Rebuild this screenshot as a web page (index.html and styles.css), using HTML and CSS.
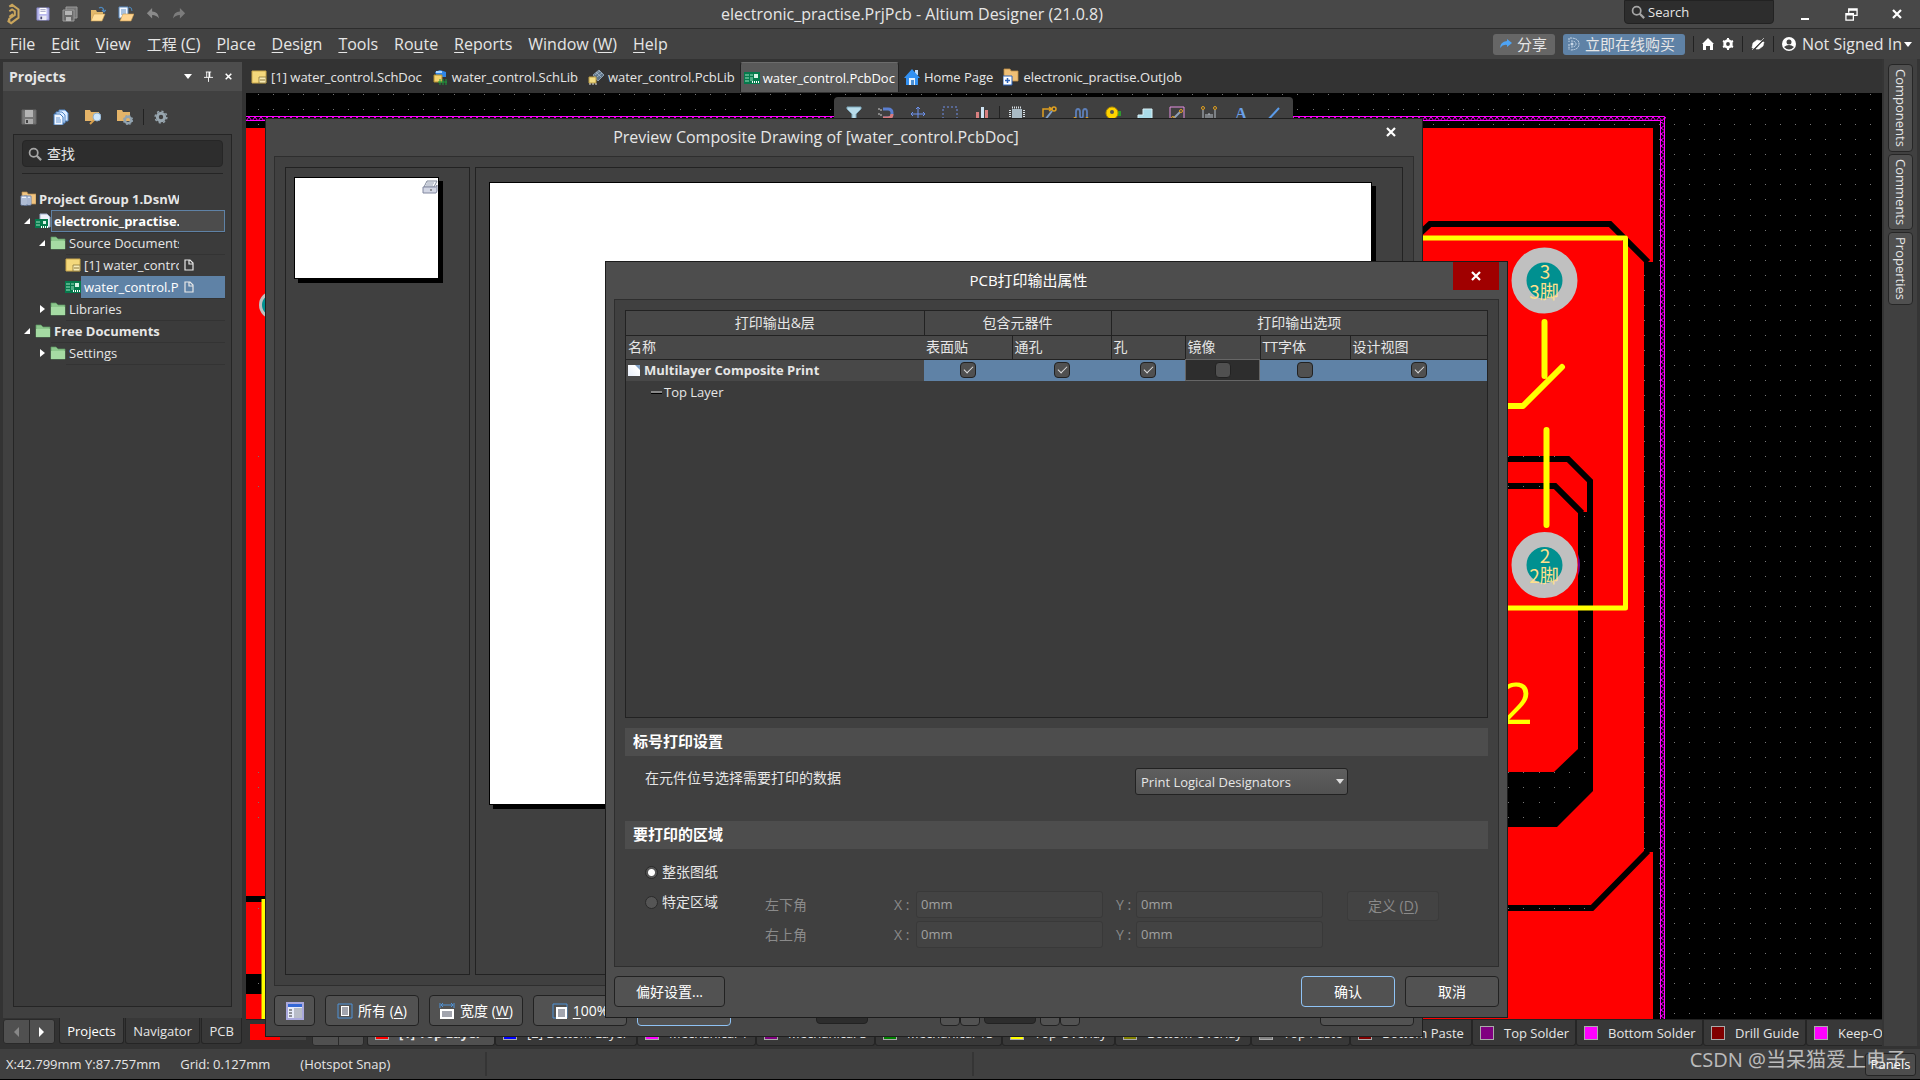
FILE: index.html
```html
<!DOCTYPE html>
<html lang="zh-CN">
<head>
    <meta charset="UTF-8">
    <meta name="viewport" content="width=device-width, initial-scale=1.0">
    <title>electronic_practise.PrjPcb - Altium Designer (21.0.8)</title>
    <link rel="stylesheet" href="styles.css">
</head>
<body>

    <!-- Icon sprite -->
    <svg class="sprite" aria-hidden="true">
        <symbol id="i-logo" viewBox="0 0 16 24"><path d="M4 4l3-2 7 5v9l-8 6-3-2 1-3 6-4V9L7 7 4 9M4 15l4-3M4 20v-3" fill="none" stroke="#c9a55c" stroke-width="2.200"/></symbol>
        <symbol id="i-save" viewBox="0 0 16 16"><path d="M1 1h14v14H1z" fill="#b9b9ee" stroke="#7c7cb8"/><path d="M4 1h8v7H4z" fill="#fff"/><path d="M4 10h8v5H4z" fill="#e8e8f4"/><path d="M5 11h2v3H5z" fill="#4b4b78"/><path d="M5 3h6M5 5h6" stroke="#9a9ac0"/></symbol>
        <symbol id="i-savegray" viewBox="0 0 16 16"><path d="M1 1h14v14H1z" fill="#777" stroke="#666"/><path d="M4 1h8v7H4z" fill="#b4b4b4"/><path d="M4 10h8v5H4z" fill="#aaa"/><path d="M5 11h2v3H5z" fill="#444"/></symbol>
        <symbol id="i-saveall" viewBox="0 0 16 16"><path d="M4 1h11v11H4z" fill="#777" stroke="#999"/><path d="M1 4h11v11H1z" fill="#6a6a6a" stroke="#999"/><path d="M3 5h7v4H3zM4 11h5v4H4z" fill="#b4b4b4"/></symbol>
        <symbol id="i-open" viewBox="0 0 16 16"><path d="M1 15V4h5l1 2h6v3" fill="#e2b96c"/><path d="M1 15l3-7h11l-3 7z" fill="#ffdf9c" stroke="#c99b4e" stroke-width=".6"/><path d="M9 2q4-2 5 3M12 4l2 2 2-2" fill="none" stroke="#4e88bd" stroke-width="1.2"/></symbol>
        <symbol id="i-opendoc" viewBox="0 0 16 16"><path d="M1 1h9v11H1z" fill="#f4f8ff" stroke="#5b8ac0"/><path d="M3 4h5M3 6h5M3 8h5" stroke="#5b8ac0"/><path d="M2 15l3-7h11l-3 7z" fill="#ffd592" stroke="#c99b4e" stroke-width=".6"/><path d="M11 1q3 0 3 4" fill="none" stroke="#4e88bd"/></symbol>
        <symbol id="i-undo" viewBox="0 0 16 16"><path d="M7 1v4q7 0 8 8-3-4-8-4v4L1 7z" fill="#8a8a8a"/></symbol>
        <symbol id="i-redo" viewBox="0 0 16 16"><path d="M9 1v4q-7 0-8 8 3-4 8-4v4l6-6z" fill="#7c7c7c"/></symbol>
        <symbol id="i-search" viewBox="0 0 16 16"><circle cx="6.500" cy="6.500" r="4.700" fill="none" stroke="#a5a5a5" stroke-width="2"/><path d="M10 10l5 5" stroke="#a5a5a5" stroke-width="2.600"/></symbol>
        <symbol id="i-sch" viewBox="0 0 16 14"><path d="M1 1h14v12H1z" fill="#f4d87c" stroke="#caa74b"/><path d="M8 7h7v6H8z" fill="#f8ebb4" stroke="#8c7638" stroke-width=".8"/><path d="M9 10h5" stroke="#8c7638"/></symbol>
        <symbol id="i-schlib" viewBox="0 0 16 16"><path d="M3 3l5-2 6 2v5H5z" fill="#2f86e8"/><path d="M4 2h6v2H4z" fill="#a9d4ff"/><path d="M2 6h8v7H2z" fill="#f2d26d" stroke="#b08d2e"/><path d="M6 13h9M8 10v6M11 10v6M14 10v6" stroke="#1f9a3c"/></symbol>
        <symbol id="i-pcblib" viewBox="0 0 16 16"><path d="M5 6l6-5 5 5-6 6z" fill="#5f7488" stroke="#9eb1c2" stroke-width=".8"/><path d="M7 6l5-4M9 8l5-4M8 3l5 5" stroke="#a9bccd" stroke-width=".8"/><path d="M1 8h7v6H1z" fill="#f2dc82" stroke="#b89a45"/><path d="M2 16v-2M5 16v-2M8 16v-2" stroke="#ddd"/></symbol>
        <symbol id="i-pcb" viewBox="0 0 16 14"><path d="M0 1h16v12H0z" fill="#067a4c"/><path d="M2 3v8M4 3v8" stroke="#9be3c0" stroke-dasharray="2 1"/><path d="M6 4h3M6 7h3M6 9h3" stroke="#9be3c0"/><path d="M10 3h4v4h-4z" fill="#d8f3e5"/><path d="M8 11h8" stroke="#fff" stroke-width="2" stroke-dasharray="1 1"/></symbol>
        <symbol id="i-prj" viewBox="0 0 16 16"><path d="M5 1h7l3 3v10H5z" fill="#eef2fb" stroke="#9fb0cc"/><path d="M0 6h13v9H0z" fill="#067a4c"/><path d="M2 8v6M4 8v6" stroke="#9be3c0" stroke-dasharray="2 1"/><path d="M8 8h3v3H8z" fill="#d8f3e5"/><path d="M6 14h7" stroke="#fff" stroke-width="2" stroke-dasharray="1 1"/></symbol>
        <symbol id="i-home" viewBox="0 0 16 18"><path d="M11 2h3v5h-3z" fill="#c6dcf5"/><path d="M8 1l8 9h-2v7H2v-7H0z" fill="#3391f2"/><path d="M5 10h6v7H5z" fill="#e6f2ff"/><path d="M7 12h3v5H7z" fill="#4a8fd4"/></symbol>
        <symbol id="i-outjob" viewBox="0 0 16 18"><path d="M1 1h6l1 2h7v10H1z" fill="#efbf76" stroke="#c08f48" stroke-width=".8"/><path d="M0 8h9v9H0z" fill="#fff" stroke="#2c62b8"/><path d="M2 12.500h5M4.500 10v5" stroke="#2c62b8" stroke-width="1.500"/></symbol>
        <symbol id="i-docs" viewBox="0 0 16 16"><path d="M6 1h6l3 3v8H6z" fill="#dcebff" stroke="#5288c8"/><path d="M3 3h6l3 3v8H3z" fill="#dcebff" stroke="#5288c8"/><path d="M1 5h6l3 3v8H1z" fill="#f0f6ff" stroke="#3f79bd"/><path d="M3 9h4M3 11h5M3 13h5" stroke="#6a9bd6"/></symbol>
        <symbol id="i-fsearch" viewBox="0 0 16 16"><path d="M0 1h5l1 2h8v9H0z" fill="#e5b468"/><circle cx="12" cy="8" r="4" fill="#cfe6fa" stroke="#8fb0cd"/><path d="M9 11l-4 4" stroke="#d9a04c" stroke-width="2"/></symbol>
        <symbol id="i-fgear" viewBox="0 0 16 16"><path d="M0 1h5l1 2h7v9H0z" fill="#e5b468"/><circle cx="11" cy="11" r="3.200" fill="none" stroke="#92a3b0" stroke-width="2.400"/><circle cx="11" cy="11" r="4.700" fill="none" stroke="#92a3b0" stroke-width="1" stroke-dasharray="2 1.700"/></symbol>
        <symbol id="i-gear" viewBox="0 0 16 16"><circle cx="8" cy="8" r="4.200" fill="none" stroke="#98a6af" stroke-width="3.400"/><circle cx="8" cy="8" r="6.700" fill="none" stroke="#98a6af" stroke-width="1.600" stroke-dasharray="2.600 2.600"/></symbol>
        <symbol id="i-group" viewBox="0 0 16 16"><path d="M2 1h5l1 2h8v10H2z" fill="#f0c481" stroke="#b58a4a" stroke-width=".7"/><path d="M4 5h7v9H4z" fill="#dfe6f4" stroke="#7186ad"/><path d="M1 5h6v9H1z" fill="#eef3fc" stroke="#7186ad"/><path d="M2 8h4M2 10h4M2 12h4M8 8h2M8 10h2M8 12h2" stroke="#7186ad"/></symbol>
        <symbol id="i-folder" viewBox="0 0 16 14"><path d="M1 1h5l2 2h7v10H1z" fill="#8cc78c" stroke="#5d9a62" stroke-width=".7"/><path d="M1 5h14v8H1z" fill="#a5dba3"/></symbol>
        <symbol id="i-page" viewBox="0 0 10 12"><path d="M1 1h5l3 3v7H1zM5 1v4h4" fill="none" stroke="#e8e8e8" stroke-width="1.200"/></symbol>
        <symbol id="i-printer" viewBox="0 0 16 14"><path d="M5 1h10l-3 6H2z" fill="#f5f7fb" stroke="#7f8799"/><path d="M5 3h7M4 5h7" stroke="#9aa2b4"/><path d="M1 7h13l1-2v6l-1 2H1z" fill="#d2d6e4" stroke="#8288a0"/><path d="M9 9v2" stroke="#444"/></symbol>
        <symbol id="i-x" viewBox="0 0 10 10"><path d="M1 1l8 8M9 1l-8 8" stroke="#fff" stroke-width="2.200"/></symbol>
        <symbol id="i-restore" viewBox="0 0 14 14"><path d="M4 5V1h9v7H9" fill="none" stroke="#fff" stroke-width="1.400"/><path d="M4 2h9M1 7h8" stroke="#fff" stroke-width="2"/><path d="M1 6h8v7H1z" fill="none" stroke="#fff" stroke-width="1.400"/></symbol>
        <symbol id="i-pin" viewBox="0 0 10 12"><path d="M2 1h6M3 1v6M0 7h10M5 7v5" stroke="#fff" fill="none"/><path d="M5 1h2v6H5z" fill="#fff"/></symbol>
        <symbol id="i-share" viewBox="0 0 12 10"><path d="M7 0l5 4-5 4V6Q3 5 0 9q0-6 7-7z" fill="#4ea4f5"/></symbol>
        <symbol id="i-buy" viewBox="0 0 12 14"><path d="M2 1q9 0 9 6t-9 6M3 4q5 0 5 3t-5 3M1 1v4M1 7v6" fill="none" stroke="#c9d8e8" stroke-dasharray="2 .7"/><circle cx="4" cy="7" r="1.500" fill="#c9d8e8"/></symbol>
        <symbol id="i-whome" viewBox="0 0 12 12"><path d="M6 0l6 6h-1v6H8V8H4v4H1V6H0z" fill="#fff"/></symbol>
        <symbol id="i-wgear" viewBox="0 0 12 12"><circle cx="6" cy="6" r="3.300" fill="none" stroke="#fff" stroke-width="2.800"/><path d="M6 0v2M6 10v2M1 3l2 1M9 8l2 1M1 9l2-1M9 4l2-1" stroke="#fff" stroke-width="2"/></symbol>
        <symbol id="i-noext" viewBox="0 0 14 12"><path d="M1 10l1-5 4-3 4 1L3 10zM5 11l6-7h2l-1 4-4 3zM1 12L13 0" fill="#fff" stroke="#fff" stroke-width=".6"/><path d="M2 12L14 1" stroke="#424242"/></symbol>
        <symbol id="i-user" viewBox="0 0 14 14"><circle cx="7" cy="7" r="7" fill="#fff"/><circle cx="7" cy="5" r="2.500" fill="#424242"/><path d="M2 10q5-4 10 0-5 5-10 0z" fill="#424242"/></symbol>
        <!-- active bar -->
        <symbol id="t-filter" viewBox="0 0 16 16"><path d="M1 1h14v2l-5 5v8H6V8L1 3z" fill="#b9dcea" stroke="#7fa9bc"/></symbol>
        <symbol id="t-snap" viewBox="0 0 16 16"><path d="M5 3h5q4 0 4 4 0 5-4 5H5" fill="none" stroke="#5b7fd0" stroke-width="3"/><path d="M14 8q0 4-4 4H5" fill="none" stroke="#d97a7a" stroke-width="3"/><path d="M1 2v12M3 3v11" stroke="#ccc" stroke-dasharray="2 3"/></symbol>
        <symbol id="t-cross" viewBox="0 0 16 16"><path d="M8 1v14M1 8h14" stroke="#6c92ee" fill="none"/><path d="M6 3l2-2 2 2M3 6L1 8l2 2M13 6l2 2-2 2" stroke="#6c92ee" fill="none"/></symbol>
        <symbol id="t-select" viewBox="0 0 16 16"><path d="M1 1h14v14H1z" fill="none" stroke="#6f8fe8" stroke-dasharray="2 2"/></symbol>
        <symbol id="t-align" viewBox="0 0 16 16"><path d="M2 6h3v7H2zM11 4h3v9h-3z" fill="#d98080"/><path d="M7 1h3v12H7z" fill="#cfe4f4"/><path d="M1 14h14" stroke="#eee"/></symbol>
        <symbol id="t-chip" viewBox="0 0 16 16"><path d="M3 3h10v12H3z" fill="#a9bac4"/><path d="M3 1.500h10M1 4v12M15 4v12" stroke="#d8dfe4" stroke-width="2" stroke-dasharray="1 1" fill="none"/></symbol>
        <symbol id="t-route" viewBox="0 0 16 16"><path d="M2 11V3h8M8 1l3 2-3 2" fill="none" stroke="#e0a020" stroke-width="1.500"/><circle cx="13" cy="3" r="2" fill="none" stroke="#e0a020" stroke-width="1.500"/><path d="M11 5l-7 9" stroke="#7fa0c8" stroke-width="2"/></symbol>
        <symbol id="t-wave" viewBox="0 0 16 16"><path d="M1 13q2 0 2-3V6q0-3 2-3t2 3v3q0 3 1.500 3T10 9V6q0-3 2-3t2 3v7" fill="none" stroke="#5d7fb8" stroke-width="1.800"/><circle cx="2" cy="13" r="1.600" fill="none" stroke="#e0a020"/><circle cx="14" cy="13" r="1.600" fill="none" stroke="#e0a020"/></symbol>
        <symbol id="t-via" viewBox="0 0 16 16"><path d="M9 5h7v5H9z" fill="#2e9a2e"/><circle cx="7" cy="7" r="6" fill="#ffd400" stroke="#b89000"/><circle cx="7" cy="6" r="2" fill="#555"/><path d="M6 13h3v3H6z" fill="#ffd400"/></symbol>
        <symbol id="t-poly" viewBox="0 0 16 16"><path d="M1 15V9h5V3h9v12z" fill="#a9dbe8" stroke="#d8f0f6"/></symbol>
        <symbol id="t-line" viewBox="0 0 16 16"><path d="M1 1h14v16H1z" fill="none" stroke="#e58fe0"/><path d="M4 13l7-7" stroke="#8fa0b8" stroke-width="2"/><circle cx="12" cy="5" r="1.500" fill="none" stroke="#e0a020"/><circle cx="4" cy="12" r="1.500" fill="none" stroke="#e0a020"/></symbol>
        <symbol id="t-dim" viewBox="0 0 16 16"><path d="M2 4v12M14 4v12M5 8v6M11 8v6" stroke="#b8c0c8"/><path d="M7 8h2v6H7z" fill="none" stroke="#b8c0c8"/><circle cx="2" cy="2" r="1.500" fill="none" stroke="#e0a020"/><circle cx="14" cy="2" r="1.500" fill="none" stroke="#e0a020"/></symbol>
        <symbol id="t-slash" viewBox="0 0 16 16"><path d="M2 15L14 2" stroke="#5b9be8" stroke-width="2"/></symbol>
        <!-- preview buttons -->
        <symbol id="b-layout" viewBox="0 0 18 18"><path d="M0 0h18v18H0z" fill="#a9a8dc"/><path d="M2 2h14v14H2z" fill="#e8ecfa"/><path d="M2 2h14v3H2z" fill="#3367d6"/><path d="M8 6h8v10H8z" fill="#b8bcc8"/><path d="M3 8h3M3 11h3M3 14h3" stroke="#333"/></symbol>
        <symbol id="b-all" viewBox="0 0 16 16"><path d="M1 1h14v14H1z" fill="none" stroke="#4f92d6"/><path d="M4 3h8v10H4z" fill="#fff"/><path d="M5 5h6M5 7h6M5 9h6M5 11h6" stroke="#444a5c"/></symbol>
        <symbol id="b-width" viewBox="0 0 16 16"><path d="M1 0v5M15 0v5M2 2h12M4 0L2 2l2 2M12 0l2 2-2 2" fill="none" stroke="#4f92d6"/><path d="M1 6h14v10H1z" fill="#fff"/><path d="M3 9h10M3 11h10M3 13h10" stroke="#444a5c"/></symbol>
        <symbol id="b-full" viewBox="0 0 16 16"><path d="M1 1h14v14H1z" fill="none" stroke="#4f92d6"/><path d="M4 4h11v12H4z" fill="#fff"/><path d="M6 7h7M6 9h7M6 11h7M6 13h7" stroke="#444a5c"/></symbol>
    </svg>

    <div class="app">
        <!-- Title bar -->
        <header class="titlebar">
            <div class="quick">
                <svg width="16" height="22"><use href="#i-logo"/></svg>
                <svg width="14" height="14"><use href="#i-save"/></svg>
                <svg width="16" height="16"><use href="#i-saveall"/></svg>
                <svg width="16" height="16"><use href="#i-open"/></svg>
                <svg width="16" height="16"><use href="#i-opendoc"/></svg>
                <svg width="14" height="14"><use href="#i-undo"/></svg>
                <svg width="14" height="14"><use href="#i-redo"/></svg>
            </div>
            <h1 class="app-title">electronic_practise.PrjPcb - Altium Designer (21.0.8)</h1>
            <div class="title-right">
                <label class="top-search">
                    <svg width="14" height="14"><use href="#i-search"/></svg>
                    <input type="text" value="Search" aria-label="Search">
                </label>
                <button class="win-btn" aria-label="Minimize"><span class="min-line"></span></button>
                <button class="win-btn" aria-label="Restore"><svg width="13" height="13"><use href="#i-restore"/></svg></button>
                <button class="win-btn" aria-label="Close"><svg width="10" height="10"><use href="#i-x"/></svg></button>
            </div>
        </header>

        <!-- Menu bar -->
        <nav class="menubar">
            <div class="menus">
                <a href="#"><u>F</u>ile</a>
                <a href="#"><u>E</u>dit</a>
                <a href="#"><u>V</u>iew</a>
                <a href="#"><span class="cjk">工程</span> (<u>C</u>)</a>
                <a href="#"><u>P</u>lace</a>
                <a href="#"><u>D</u>esign</a>
                <a href="#"><u>T</u>ools</a>
                <a href="#">Ro<u>u</u>te</a>
                <a href="#"><u>R</u>eports</a>
                <a href="#">Window (<u>W</u>)</a>
                <a href="#"><u>H</u>elp</a>
            </div>
            <div class="account">
                <button class="share"><svg width="12" height="10"><use href="#i-share"/></svg>分享</button>
                <button class="buy"><svg width="12" height="14"><use href="#i-buy"/></svg>立即在线购买</button>
                <i class="vsep"></i>
                <svg width="12" height="12"><use href="#i-whome"/></svg>
                <svg width="12" height="12"><use href="#i-wgear"/></svg>
                <i class="vsep"></i>
                <svg width="14" height="12"><use href="#i-noext"/></svg>
                <i class="vsep"></i>
                <button class="signin"><svg width="14" height="14"><use href="#i-user"/></svg>Not Signed In<i class="caret"></i></button>
            </div>
        </nav>

        <main class="workspace">
            <!-- Projects panel -->
            <aside class="side">
                <div class="panel">
                    <div class="panel-head">
                        <h2>Projects</h2>
                        <i class="caret"></i>
                        <svg width="9" height="11"><use href="#i-pin"/></svg>
                        <svg width="7" height="7"><use href="#i-x"/></svg>
                    </div>
                    <div class="panel-tools">
                        <svg width="16" height="16"><use href="#i-savegray"/></svg>
                        <svg width="16" height="16"><use href="#i-docs"/></svg>
                        <svg width="16" height="16"><use href="#i-fsearch"/></svg>
                        <svg width="16" height="16"><use href="#i-fgear"/></svg>
                        <i class="vsep"></i>
                        <svg width="14" height="14"><use href="#i-gear"/></svg>
                    </div>
                    <div class="tree-box">
                        <label class="find">
                            <svg width="14" height="14"><use href="#i-search"/></svg>
                            <input type="text" value="查找" aria-label="查找">
                        </label>
                        <ul class="tree">
                            <li class="bold lv0"><svg width="16" height="16"><use href="#i-group"/></svg><span class="name">Project Group 1.DsnWrk</span></li>
                            <li class="bold lv1 current"><i class="open"></i><svg width="16" height="16"><use href="#i-prj"/></svg><span class="name">electronic_practise.PrjPcb</span></li>
                            <li class="lv2"><i class="open"></i><svg width="16" height="14"><use href="#i-folder"/></svg><span class="name">Source Documents</span></li>
                            <li class="lv3"><svg width="16" height="14"><use href="#i-sch"/></svg><span class="name">[1] water_control.SchDoc</span><svg class="state" width="10" height="12"><use href="#i-page"/></svg></li>
                            <li class="lv3 selected"><svg width="16" height="14"><use href="#i-pcb"/></svg><span class="name">water_control.PcbDoc</span><svg class="state" width="10" height="12"><use href="#i-page"/></svg></li>
                            <li class="lv2"><i class="shut"></i><svg width="16" height="14"><use href="#i-folder"/></svg><span class="name">Libraries</span></li>
                            <li class="bold lv1"><i class="open"></i><svg width="16" height="14"><use href="#i-folder"/></svg><span class="name">Free Documents</span></li>
                            <li class="lv2"><i class="shut"></i><svg width="16" height="14"><use href="#i-folder"/></svg><span class="name">Settings</span></li>
                        </ul>
                    </div>
                </div>
                <div class="panel-tabs">
                    <div class="pager">
                        <button aria-label="Previous"><i class="left"></i></button>
                        <button aria-label="Next"><i class="right"></i></button>
                    </div>
                    <button class="on">Projects</button>
                    <button>Navigator</button>
                    <button>PCB</button>
                </div>
            </aside>

            <!-- Documents -->
            <section class="docs">
                <div class="doc-tabs">
                    <a href="#"><svg width="16" height="14"><use href="#i-sch"/></svg>[1] water_control.SchDoc</a>
                    <a href="#"><svg width="16" height="16"><use href="#i-schlib"/></svg>water_control.SchLib</a>
                    <a href="#"><svg width="16" height="16"><use href="#i-pcblib"/></svg>water_control.PcbLib</a>
                    <a href="#" class="on"><svg width="16" height="14"><use href="#i-pcb"/></svg>water_control.PcbDoc</a>
                    <a href="#"><svg width="16" height="18"><use href="#i-home"/></svg>Home Page</a>
                    <a href="#"><svg width="16" height="18"><use href="#i-outjob"/></svg>electronic_practise.OutJob</a>
                </div>

                <div class="canvas">
                    <svg class="board" viewBox="246 93 1636 926" preserveAspectRatio="xMinYMin slice">
                        <defs>
                            <pattern id="hatch-h" x="246" y="116" width="6" height="6" patternUnits="userSpaceOnUse"><path d="M0 5l3-4 3 4" fill="none" stroke="#f0f"/></pattern>
                            <pattern id="hatch-v" x="1660" y="116" width="6" height="6" patternUnits="userSpaceOnUse"><path d="M1 0l4 3-4 3" fill="none" stroke="#f0f"/></pattern>
                        </defs>
                        <path d="M246 93h1636v926H246z"/>
                        <path d="M246 128h1407v891H246z" fill="#f00"/>
                        <!-- clearance gaps in the copper -->
                        <path d="M1644 262h9v590h-9zM1578 512h15v279l-36 36h-157v-55h154l24-23zM246 896h19v6h-19zM246 974h19v20h-19z"/>
                        <g fill="none" stroke="#000" stroke-width="6">
                            <path d="M1415 238l15-14h180l38 38"/>
                            <path d="M1400 459h168l22 22v35M1400 486h155l27 27"/>
                            <path d="M1400 908h192l56-57"/>
                        </g>
                        <path id="dots" fill="#777" shape-rendering="crispEdges"/>
                        <!-- keep-out outline -->
                        <path d="M246 116h1420v6H246z" fill="url(#hatch-h)"/>
                        <path d="M1660 122h6v897h-6z" fill="url(#hatch-v)"/>
                        <path d="M246 116.500h1418.500V1019M246 120.500h1414.500V1019" fill="none" stroke="#f0f"/>
                        <!-- overlay -->
                        <g fill="none" stroke="#ff0" stroke-width="5" stroke-linejoin="round">
                            <path d="M1400 238h225.500v370H1400"/>
                            <path d="M1544.500 322v54M1500 406h23l39-39M1546.500 430v95" stroke-linecap="round" stroke-width="6"/>
                            <path d="M264 899v120"/>
                        </g>
                        <text class="silk" x="1533" y="724" text-anchor="end">2</text>
                        <path d="M1578 554q4 11 0 22z" fill="#800080"/>
                        <g fill="#009090" stroke="#c0c0c0">
                            <circle cx="1544.500" cy="280.500" r="25.500" stroke-width="15"/>
                            <circle cx="1544.500" cy="565" r="25.500" stroke-width="15"/>
                            <circle cx="273" cy="305" r="12.500" stroke-width="3"/>
                        </g>
                        <g class="pad" text-anchor="middle">
                            <text x="1545" y="279">3</text><text x="1544" y="299">3脚</text>
                            <text x="1545" y="563">2</text><text x="1544" y="583">2脚</text>
                        </g>
                    </svg>

                    <div class="active-bar">
                        <svg><use href="#t-filter"/></svg>
                        <svg><use href="#t-snap"/></svg>
                        <svg><use href="#t-cross"/></svg>
                        <svg><use href="#t-select"/></svg>
                        <svg><use href="#t-align"/></svg>
                        <i class="vsep"></i>
                        <svg><use href="#t-chip"/></svg>
                        <svg><use href="#t-route"/></svg>
                        <svg><use href="#t-wave"/></svg>
                        <svg><use href="#t-via"/></svg>
                        <svg><use href="#t-poly"/></svg>
                        <svg><use href="#t-line"/></svg>
                        <svg><use href="#t-dim"/></svg>
                        <b>A</b>
                        <svg><use href="#t-slash"/></svg>
                    </div>
                </div>

                <div class="layers">
                    <span class="set-color"></span>
                    <button class="set">LS</button>
                    <div class="pager"><button aria-label="Previous layer"></button><button aria-label="Next layer"></button></div>
                    <button class="layer w128 on"><i class="red"></i>[1] Top Layer</button>
                    <button class="layer w142"><i class="blue"></i>[2] Bottom Layer</button>
                    <button class="layer w119"><i class="magenta"></i>Mechanical 1</button>
                    <button class="layer w119"><i class="purple"></i>Mechanical 3</button>
                    <button class="layer w127"><i class="green"></i>Mechanical 13</button>
                    <button class="layer w113"><i class="yellow"></i>Top Overlay</button>
                    <button class="layer w136"><i class="olive"></i>Bottom Overlay</button>
                    <button class="layer w99"><i class="gray"></i>Top Paste</button>
                    <button class="layer w122"><i class="maroon"></i>Bottom Paste</button>
                    <button class="layer w104"><i class="purple"></i>Top Solder</button>
                    <button class="layer w127"><i class="magenta"></i>Bottom Solder</button>
                    <button class="layer w103"><i class="maroon"></i>Drill Guide</button>
                    <button class="layer w142"><i class="magenta"></i>Keep-Out Layer</button>
                </div>
            </section>

            <!-- Collapsed panels -->
            <aside class="rail">
                <button>Components</button>
                <button>Comments</button>
                <button>Properties</button>
            </aside>
        </main>

        <footer class="status">
            <div class="cell"><span>X:42.799mm Y:87.757mm</span><span>Grid: 0.127mm</span><span>(Hotspot Snap)</span></div>
            <div class="cell"></div>
            <button class="panels">Panels</button>
        </footer>
    </div>

    <!-- Print preview window -->
    <section class="preview" role="dialog" aria-labelledby="preview-title">
        <div class="preview-head">
            <h2 id="preview-title">Preview Composite Drawing of [water_control.PcbDoc]</h2>
            <button class="plain-close" aria-label="Close"><svg width="10" height="10"><use href="#i-x"/></svg></button>
        </div>
        <div class="preview-body">
            <div class="thumbs"><div class="thumb"><svg width="16" height="14"><use href="#i-printer"/></svg></div></div>
            <div class="stage"><div class="sheet"></div></div>
        </div>
        <div class="preview-foot">
            <button class="square" aria-label="Thumbnails"><svg width="18" height="18"><use href="#b-layout"/></svg></button>
            <button><svg width="16" height="16"><use href="#b-all"/></svg><span>所有 (<u>A</u>)</span></button>
            <button><svg width="16" height="16"><use href="#b-width"/></svg><span>宽度 (<u>W</u>)</span></button>
            <button><svg width="16" height="16"><use href="#b-full"/></svg><span><u>1</u>00%</span></button>
            <button class="focus" aria-label="Print"></button>
            <input class="zoom-val" type="text" aria-label="Zoom">
            <div class="steps"><button aria-label="First page"></button><button aria-label="Previous page"></button></div>
            <input class="page-val" type="text" aria-label="Page">
            <div class="steps"><button aria-label="Next page"></button><button aria-label="Last page"></button></div>
            <button class="last" aria-label="Close preview"></button>
        </div>
    </section>

    <!-- Printout properties -->
    <form class="props" role="dialog" aria-labelledby="props-title">
        <div class="props-head">
            <h2 id="props-title">PCB打印输出属性</h2>
            <button type="button" class="red-close" aria-label="Close"><svg width="10" height="10"><use href="#i-x"/></svg></button>
        </div>
        <div class="props-body">
            <div class="grid-box">
                <table>
                    <colgroup><col><col class="c88"><col class="c99"><col class="c74"><col class="c75"><col class="c90"><col class="c137"></colgroup>
                    <thead>
                        <tr class="groups"><th>打印输出&amp;层</th><th colspan="2">包含元器件</th><th colspan="4">打印输出选项</th></tr>
                        <tr class="cols"><th>名称</th><th>表面贴</th><th class="cut">通孔</th><th class="line">孔</th><th class="cut">镜像</th><th class="cut">TT字体</th><th class="cut">设计视图</th></tr>
                    </thead>
                    <tbody>
                        <tr class="picked">
                            <td><span class="print-name"><i class="print-ico"></i>Multilayer Composite Print</span></td>
                            <td><input type="checkbox" checked aria-label="表面贴"></td>
                            <td><input type="checkbox" checked aria-label="通孔"></td>
                            <td><input type="checkbox" checked aria-label="孔"></td>
                            <td class="cell-focus"><input type="checkbox" aria-label="镜像"></td>
                            <td><input type="checkbox" aria-label="TT字体"></td>
                            <td><input type="checkbox" checked aria-label="设计视图"></td>
                        </tr>
                        <tr><td colspan="7"><span class="layer-name"><i></i>Top Layer</span></td></tr>
                    </tbody>
                </table>
            </div>

            <h3>标号打印设置</h3>
            <div class="designators">
                <label for="desig">在元件位号选择需要打印的数据</label>
                <select id="desig"><option>Print Logical Designators</option></select>
            </div>

            <h3>要打印的区域</h3>
            <div class="area">
                <label class="radio"><input type="radio" name="area" checked>整张图纸</label>
                <label class="radio"><input type="radio" name="area">特定区域</label>
                <div class="coords">
                    <span>左下角</span>
                    <label for="x1">X :</label><input id="x1" type="text" value="0mm" disabled>
                    <label for="y1">Y :</label><input id="y1" type="text" value="0mm" disabled>
                    <span>右上角</span>
                    <label for="x2">X :</label><input id="x2" type="text" value="0mm" disabled>
                    <label for="y2">Y :</label><input id="y2" type="text" value="0mm" disabled>
                </div>
                <button type="button" class="define" disabled>定义 (<u>D</u>)</button>
            </div>
        </div>
        <div class="props-foot">
            <button type="button" class="pref">偏好设置...</button>
            <button type="button" class="ok">确认</button>
            <button type="button">取消</button>
        </div>
    </form>

    <div class="watermark">CSDN @当呆猫爱上电子</div>

    <script>
        // snap grid of the editor, drawn over bare board only
        var d = '';
        for (var y = 94; y < 1019; y += 15.07) {
            for (var x = 257.600; x < 1880; x += 15.07) {
                var px = Math.round(x), py = Math.round(y);
                var bare = py < 128 || px >= 1653 ||
                    (px >= 1644 && py > 262 && py < 852) ||
                    (px >= 1578 && px < 1593 && py > 512 && py < 780) ||
                    (px < 1578 && py >= 772 && py < 827 && px + py < 2370) ||
                    (px < 1590 && py > 904 && py < 911) ||
                    (px < 1560 && py > 454 && py < 462) ||
                    (px < 1550 && py > 482 && py < 490) ||
                    (px < 262 && py > 974 && py < 994);
                if (bare) d += 'M' + px + ' ' + py + 'h1v1h-1z';
            }
        }
        document.getElementById('dots').setAttribute('d', d);
    </script>
</body>
</html>
```
FILE: styles.css
```css
/* Reset and Global Styles */
* {
    margin: 0;
    padding: 0;
    box-sizing: border-box;
}

body {
    position: relative;
    height: 100vh;
    overflow: hidden;
    background: #333;
    color: #e6e6e6;
    font-family: "Open Sans", "Noto Sans CJK SC", sans-serif;
    font-size: 13px;
    line-height: 20px;
}

button, input, select {
    font: inherit;
    color: inherit;
}

button {
    border: none;
    background: none;
}

a {
    color: inherit;
    text-decoration: none;
}

svg {
    display: block;
    flex: none;
}

u {
    text-underline-offset: 2px;
}

h1, h2, h3 {
    font-size: inherit;
    font-weight: normal;
}

.sprite {
    position: absolute;
    width: 0;
    height: 0;
}

.app {
    display: flex;
    flex-direction: column;
    height: 100%;
    border-bottom: 1px solid #000;
}

.caret {
    border: 4px solid transparent;
    border-top: 5px solid #fff;
    border-bottom: 0;
}

.vsep {
    flex: none;
    width: 1px;
    height: 16px;
    background: #222;
}

/* Title bar */
.titlebar {
    display: grid;
    grid-template-columns: 1fr auto 1fr;
    height: 29px;
    background: #484848;
    border-bottom: 1px solid #2c2c2c;
}

.quick {
    display: flex;
    align-items: center;
    gap: 12px;
    padding-left: 5px;
}

.quick svg:first-child {
    margin-right: 3px;
}

.app-title {
    margin-right: 96px;
    font-size: 16px;
    line-height: 28px;
}

.title-right {
    display: flex;
    justify-content: flex-end;
}

.top-search {
    display: flex;
    align-items: center;
    gap: 3px;
    width: 150px;
    height: 24px;
    padding-left: 6px;
    margin-right: 8px;
    background: #2d2d2d;
    border: 1px solid #222;
    border-radius: 0 0 4px 4px;
}

.top-search input,
.find input {
    width: 100%;
    background: none;
    border: none;
}

.win-btn {
    display: flex;
    align-items: center;
    justify-content: center;
    width: 46px;
    height: 28px;
}

.min-line {
    width: 8px;
    height: 2px;
    margin-top: 10px;
    background: #fff;
}

/* Menu bar */
.menubar {
    display: flex;
    justify-content: space-between;
    height: 30px;
    background: #424242;
    line-height: 30px;
    font-size: 16px;
}

.menus {
    display: flex;
    gap: 16px;
    padding-left: 10px;
}

.menus .cjk {
    font-size: 15px;
}

.account {
    display: flex;
    align-items: center;
    gap: 8px;
    padding-right: 8px;
}

.account button {
    display: flex;
    align-items: center;
    gap: 5px;
    height: 21px;
    border-radius: 3px;
    font-size: 15px;
    line-height: 21px;
}

.account .share {
    width: 62px;
    padding-left: 7px;
    background: #666;
}

.account .buy {
    width: 122px;
    padding-left: 5px;
    background: #5f82a6;
}

.account .signin {
    gap: 6px;
    font-size: 16px;
}

.signin .caret {
    margin-left: -4px;
}

/* Workspace */
.workspace {
    display: flex;
    flex: 1;
    min-height: 0;
}

.side {
    display: flex;
    flex-direction: column;
    width: 246px;
    padding: 3px 4px 5px 3px;
}

.panel {
    display: flex;
    flex: 1;
    flex-direction: column;
    background: #404040;
}

.panel-head {
    display: flex;
    align-items: center;
    gap: 12px;
    height: 29px;
    padding: 0 10px 0 6px;
    background: #4d4d4d;
}

.panel-head h2 {
    flex: 1;
    font-size: 14px;
    font-weight: bold;
}

.panel-tools {
    display: flex;
    align-items: center;
    gap: 16px;
    height: 43px;
    padding: 9px 0 0 18px;
}

.panel-tools .vsep {
    margin: 0 -6px;
}

.tree-box {
    flex: 1;
    margin: 0 10px 11px;
    padding: 5px 8px;
    background: #3b3b3b;
    border: 1px solid #252525;
}

.find {
    display: flex;
    align-items: center;
    gap: 5px;
    height: 27px;
    padding-left: 5px;
    background: #2d2d2d;
    border: 1px solid #262626;
    border-radius: 4px;
    font-size: 14px;
}

.tree {
    margin-top: 6px;
    padding-top: 14px;
    border-top: 1px solid #252525;
    list-style: none;
}

.tree li {
    position: relative;
    display: flex;
    align-items: center;
    height: 22px;
    margin-right: -2px;
}

.tree .bold {
    font-weight: bold;
}

.tree i {
    flex: none;
    width: 11px;
}

.tree .open::before,
.tree .shut::before {
    content: "";
    display: block;
    width: 0;
    height: 0;
}

.tree .open::before {
    border-left: 6px solid transparent;
    border-bottom: 6px solid #fff;
}

.tree .shut::before {
    margin-left: 1px;
    border: 4px solid transparent;
    border-left: 5px solid #fff;
    border-right: 0;
}

/* the right border keeps the column of the state icons free */
.tree .name {
    flex: 1;
    height: 22px;
    padding-left: 3px;
    border-right: 46px solid transparent;
    line-height: 22px;
    white-space: nowrap;
    overflow: hidden;
    box-shadow: 0 1px 0 #333;
}

.tree .lv0 { margin-left: -2px; }
.tree .lv1 { padding-left: 2px; }
.tree .lv2 { padding-left: 17px; }
.tree .lv3 { padding-left: 43px; }

.tree .lv0 .name {
    box-shadow: none;
}

.tree .current .name {
    background: #4c4c4c;
    outline: 1px solid #5f82a6;
    outline-offset: -1px;
    color: #fff;
}

.tree .selected .name {
    background: #5f82a6;
    color: #fff;
}

.tree .state {
    position: absolute;
    right: 31px;
}

.panel-tabs {
    display: flex;
    gap: 1px;
    height: 26px;
}

.panel-tabs > button {
    flex: auto;
    background: #383838;
    border: 1px solid #252525;
    border-top: none;
    border-radius: 0 0 3px 3px;
}

.panel-tabs > button.on {
    background: #404040;
    color: #fff;
}

.pager {
    display: flex;
    width: 52px;
    margin: 1px 3px 0 0;
    background: #505050;
    border: 1px solid #2a2a2a;
    border-radius: 3px;
}

.pager button {
    display: flex;
    flex: 1;
    align-items: center;
    justify-content: center;
}

.pager button + button {
    border-left: 1px solid #2a2a2a;
}

.pager .left,
.pager .right {
    border: 5px solid transparent;
}

.pager .left {
    border-left: 0;
    border-right-color: #888;
}

.pager .right {
    border-right: 0;
    border-left-color: #fff;
}

/* Documents */
.docs {
    display: flex;
    flex: 1;
    flex-direction: column;
    min-width: 0;
}

.doc-tabs {
    display: flex;
    height: 34px;
    padding-top: 3px;
    line-height: 28px;
}

.doc-tabs a {
    display: flex;
    align-items: center;
    gap: 4px;
    height: 30px;
    padding: 0 5px;
    white-space: nowrap;
}

.doc-tabs .on {
    gap: 3px;
    background: #595959;
    border: 1px solid #222;
    border-top-color: #6c6c6c;
    border-bottom: none;
    border-radius: 3px 3px 0 0;
    padding: 0 3px;
    color: #fff;
}

.canvas {
    position: relative;
    flex: 1;
    min-height: 0;
    background: #000;
}

.board {
    position: absolute;
    inset: 0;
    width: 100%;
    height: 100%;
}

.silk {
    fill: #ff0;
    font-size: 57px;
}

.pad {
    fill: #ffe08c;
    font-family: "Noto Sans CJK SC", sans-serif;
    font-size: 19px;
}

.active-bar {
    position: absolute;
    top: 4px;
    left: 588px;
    display: flex;
    align-items: center;
    gap: 16px;
    height: 34px;
    padding: 0 12px;
    background: #404040;
    border-radius: 4px;
}

.active-bar svg {
    width: 16px;
    height: 16px;
}

.active-bar .vsep {
    margin: 0 -7px;
}

.active-bar b {
    width: 16px;
    font: bold 16px "Liberation Serif", serif;
    color: #6aa0e8;
    text-align: center;
}

.layers {
    display: flex;
    height: 30px;
    padding-left: 4px;
    border-top: 1px solid #222;
    overflow: hidden;
}

.set-color {
    flex: none;
    width: 30px;
    height: 16px;
    margin-top: 4px;
    background: #f00;
}

.set {
    flex: none;
    width: 26px;
    height: 16px;
    margin: 4px 6px 0 0;
    background: #444;
    font-size: 12px;
    line-height: 16px;
}

.layers .pager {
    flex: none;
    height: 26px;
    margin: 0 3px 0 0;
}

.layer {
    display: flex;
    flex: none;
    align-items: center;
    gap: 10px;
    height: 26px;
    padding-left: 7px;
    background: #383838;
    border: 1px solid #252525;
    border-top: none;
    border-radius: 0 0 3px 3px;
    white-space: nowrap;
}

.layer.on {
    background: #505050;
    font-weight: bold;
}

.layer i {
    width: 14px;
    height: 14px;
    border: 1px solid #aaa;
}

.w99 { width: 99px; }
.w103 { width: 103px; }
.w104 { width: 104px; }
.w113 { width: 113px; }
.w119 { width: 119px; }
.w122 { width: 122px; }
.w127 { width: 127px; }
.w128 { width: 128px; }
.w136 { width: 136px; }
.w142 { width: 142px; }

.red { background: #f00; }
.blue { background: #00f; }
.magenta { background: #f0f; }
.purple { background: #800080; }
.green { background: #008000; }
.yellow { background: #ff0; }
.olive { background: #808000; }
.gray { background: #808080; }
.maroon { background: #800000; }

/* Right rail */
.rail {
    display: flex;
    flex-direction: column;
    gap: 2px;
    width: 38px;
    margin-bottom: 3px;
    padding: 5px 4px 0;
    background: #404040;
    border: solid #353535;
    border-width: 0 3px 0 2px;
}

.rail button {
    padding: 4px 0;
    background: #505050;
    border: 1px solid #262626;
    border-radius: 4px;
    writing-mode: vertical-rl;
    line-height: 22px;
}

/* Status bar */
.status {
    display: flex;
    align-items: center;
    height: 30px;
    padding-right: 4px;
    background: #404040;
}

.cell {
    display: flex;
    align-items: center;
    gap: 20px;
    width: 487px;
    height: 24px;
    padding-left: 6px;
    border-right: 2px solid #353535;
}

.cell span:last-child {
    margin-left: 10px;
}

.panels {
    width: 51px;
    height: 23px;
    margin-left: auto;
    background: #4d4d4d;
    border: 1px solid #252525;
    border-radius: 3px;
    color: #fff;
}

.watermark {
    position: absolute;
    right: 14px;
    bottom: 6px;
    color: rgba(230, 230, 230, 0.75);
    font-size: 20px;
    line-height: 28px;
}

/* Preview window */
.preview {
    position: absolute;
    top: 118px;
    right: 497px;
    bottom: 43px;
    left: 265px;
    display: flex;
    flex-direction: column;
    padding: 0 8px;
    background: #474747;
    border: 1px solid #1f1f1f;
}

.preview-head {
    position: relative;
    height: 37px;
    padding-right: 56px;
    font-size: 16px;
    line-height: 36px;
    text-align: center;
}

.plain-close {
    position: absolute;
    top: 8px;
    right: 18px;
}

.preview-body {
    display: flex;
    flex: 1;
    gap: 5px;
    padding: 10px;
    background: #404040;
    border: 1px solid #2e2e2e;
}

.thumbs,
.stage {
    border: 1px solid #222;
}

.thumbs {
    width: 185px;
    padding: 9px 8px;
}

.stage {
    flex: 1;
    display: flex;
    padding: 14px 30px 169px 13px;
}

.thumb,
.sheet {
    background: #fff;
    border: 1px solid #000;
    box-shadow: 4px 4px 0 #000;
}

.thumb {
    display: flex;
    justify-content: flex-end;
    width: 145px;
    height: 102px;
    padding-top: 2px;
}

.sheet {
    flex: 1;
}

.preview-foot {
    display: flex;
    gap: 10px;
    height: 50px;
    padding-top: 9px;
    font-size: 14px;
}

.preview-foot button,
.props-foot button {
    display: flex;
    align-items: center;
    justify-content: center;
    gap: 5px;
    width: 94px;
    height: 31px;
    background: #525252;
    border: 1px solid #222;
    border-radius: 4px;
    color: #fff;
}

.preview-foot .square {
    width: 41px;
}

.preview-foot .focus,
.props-foot .ok {
    border-color: #8fc3f5;
}

.preview-foot input {
    width: 52px;
    height: 29px;
    background: #2d2d2d;
    border: 1px solid #222;
    border-radius: 4px;
}

.preview-foot .zoom-val {
    margin-left: 75px;
}

.preview-foot .steps {
    display: flex;
    margin: 0 -6px;
}

.preview-foot .steps button {
    width: 20px;
}

.preview-foot .zoom-val + .steps {
    margin-left: 62px;
}

.preview-foot .last {
    margin-left: auto;
}

/* Printout properties window */
.props {
    position: absolute;
    top: 261px;
    right: 412px;
    bottom: 62px;
    left: 605px;
    display: flex;
    flex-direction: column;
    padding: 0 8px;
    background: #4d4d4d;
    border: 1px solid #1c1c1c;
    font-size: 14px;
}

.props-head {
    position: relative;
    height: 37px;
    padding-right: 56px;
    color: #fff;
    font-size: 15px;
    line-height: 36px;
    text-align: center;
}

.red-close {
    position: absolute;
    top: 0;
    right: 0;
    display: flex;
    align-items: center;
    justify-content: center;
    width: 46px;
    height: 28px;
    background: #a00000;
}

.props-body {
    display: flex;
    flex: 1;
    flex-direction: column;
    padding: 10px;
    background: #404040;
    border: 1px solid #2e2e2e;
}

.grid-box {
    flex: 1;
    margin-bottom: 10px;
    background: #3b3b3b;
    border: 1px solid #222;
}

table {
    width: 100%;
    table-layout: fixed;
    border-collapse: collapse;
}

.c74 { width: 74px; }
.c75 { width: 75px; }
.c88 { width: 88px; }
.c90 { width: 90px; }
.c99 { width: 99px; }
.c137 { width: 137px; }

th {
    height: 24px;
    background: #484848;
    border-bottom: 1px solid #222;
    font-weight: normal;
    line-height: 22px;
}

.groups th + th,
.cols .line,
.cols .cut {
    border-left: 1px solid #222;
}

.cols th {
    padding-left: 2px;
    text-align: left;
}

td {
    height: 22px;
    font-size: 13px;
    line-height: 20px;
    text-align: center;
    vertical-align: middle;
}

.picked td {
    background: #5f82a6;
}

.picked td:first-child {
    background: #484848;
    font-weight: bold;
}

.picked .cell-focus {
    background: #2d2d2d;
    outline: 1px solid #666;
    outline-offset: -1px;
}

.print-name,
.layer-name {
    display: flex;
    align-items: center;
    gap: 4px;
    padding-left: 2px;
}

.print-ico {
    width: 12px;
    height: 11px;
    background: linear-gradient(225deg, #7f9fc4 3px, #fff 4px, #e8eefa);
}

.layer-name {
    gap: 2px;
    padding-left: 25px;
}

.layer-name i {
    width: 11px;
    height: 3px;
    background: #888;
    border-bottom: 1px solid #000;
}

input[type="checkbox"] {
    display: block;
    width: 16px;
    height: 16px;
    margin: 0 auto;
    appearance: none;
    background: #505050;
    border: 1px solid #222;
    border-radius: 4px;
}

input[type="checkbox"]:checked::after {
    content: "";
    display: block;
    width: 8px;
    height: 4px;
    margin: 3px;
    border: solid #ddd;
    border-width: 0 0 1px 1px;
    transform: rotate(-45deg);
}

.props h3 {
    height: 28px;
    padding-left: 8px;
    background: #4d4d4d;
    color: #fff;
    font-size: 15px;
    font-weight: bold;
    line-height: 27px;
}

.designators {
    position: relative;
    display: flex;
    justify-content: space-between;
    height: 65px;
    padding: 12px 140px 0 20px;
}

/* arrow of the drop-down */
.designators::after {
    content: "";
    position: absolute;
    top: 23px;
    right: 144px;
    border: 4px solid transparent;
    border-top: 5px solid #ddd;
    border-bottom: 0;
    pointer-events: none;
}

select {
    width: 213px;
    height: 27px;
    padding: 0 5px;
    appearance: none;
    background: linear-gradient(#5e5e5e, #525252);
    border: 1px solid #222;
    border-radius: 3px;
    font-size: 13px;
}

.area {
    display: grid;
    grid-template-columns: 96px 558px 92px;
    grid-template-rows: 30px 57px;
    column-gap: 24px;
    height: 107px;
    padding: 12px 0 0 20px;
}

.radio {
    display: flex;
    align-items: center;
    gap: 4px;
    height: 22px;
}

.radio:first-child {
    grid-column: 1 / -1;
}

.radio input {
    width: 13px;
    height: 13px;
    appearance: none;
    background: #555;
    border: 1px solid #2a2a2a;
    border-radius: 50%;
}

.radio input:checked {
    background: radial-gradient(circle, #fff 3px, #555 4px);
}

.coords {
    display: grid;
    grid-template-columns: 129px 22px 187px 33px 187px;
    row-gap: 3px;
    color: #8a8a8a;
    line-height: 27px;
}

.coords label[for^="y"] {
    padding-left: 13px;
}

.coords input {
    width: 187px;
    height: 27px;
    padding: 0 4px;
    background: #434343;
    border: 1px solid #393939;
    border-radius: 3px;
    font-size: 13px;
    color: #a0a0a0;
}

.define {
    height: 30px;
    background: #434343;
    border: 1px solid #3b3b3b;
    border-radius: 3px;
    color: #8a8a8a;
}

.props-foot {
    display: flex;
    gap: 10px;
    height: 50px;
    padding-top: 9px;
}

.props-foot .pref {
    width: 111px;
    margin-right: auto;
}
```
